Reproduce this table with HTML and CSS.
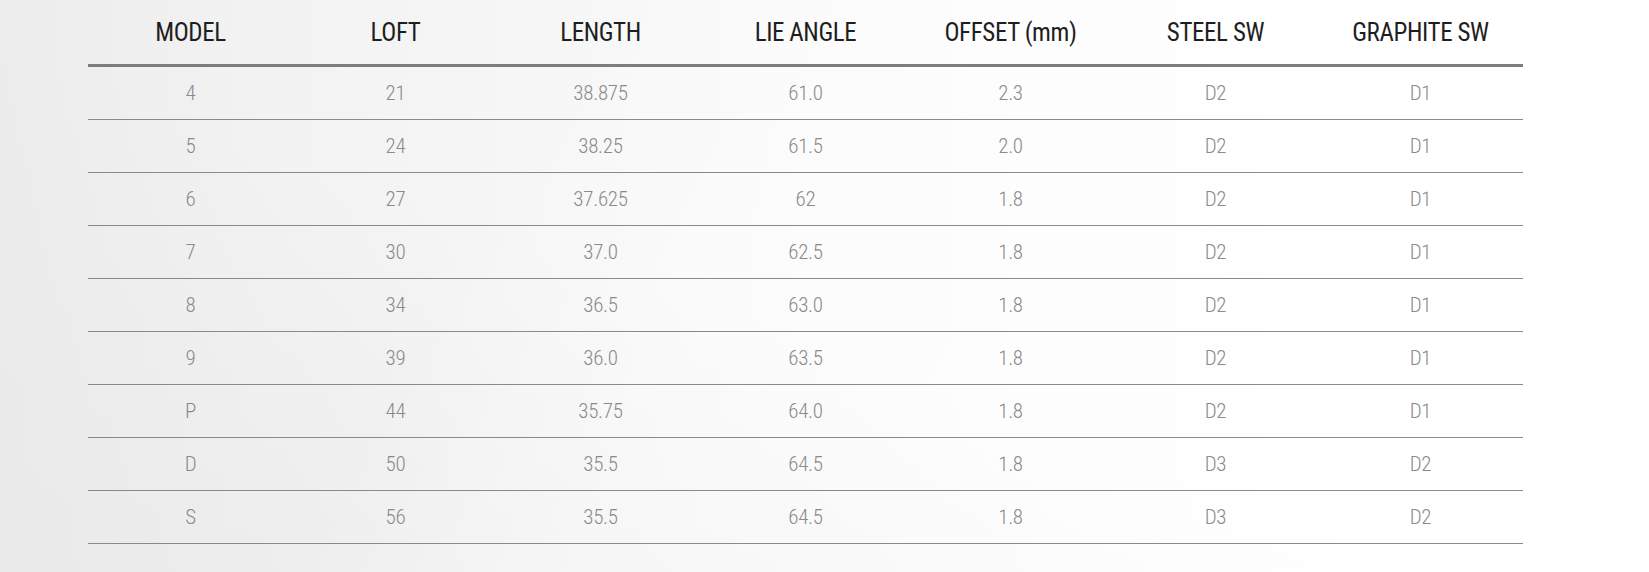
FILE: index.html
```html
<!DOCTYPE html>
<html>
<head>
<meta charset="utf-8">
<link rel="stylesheet" href="styles.css">
</head>
<body>
<div class="page">
  <table class="specs">
    <thead>
      <tr><th>MODEL</th><th>LOFT</th><th>LENGTH</th><th>LIE ANGLE</th><th>OFFSET (mm)</th><th>STEEL SW</th><th>GRAPHITE SW</th></tr>
    </thead>
    <tbody>
      <tr><td>4</td><td>21</td><td>38.875</td><td>61.0</td><td>2.3</td><td>D2</td><td>D1</td></tr>
      <tr><td>5</td><td>24</td><td>38.25</td><td>61.5</td><td>2.0</td><td>D2</td><td>D1</td></tr>
      <tr><td>6</td><td>27</td><td>37.625</td><td>62</td><td>1.8</td><td>D2</td><td>D1</td></tr>
      <tr><td>7</td><td>30</td><td>37.0</td><td>62.5</td><td>1.8</td><td>D2</td><td>D1</td></tr>
      <tr><td>8</td><td>34</td><td>36.5</td><td>63.0</td><td>1.8</td><td>D2</td><td>D1</td></tr>
      <tr><td>9</td><td>39</td><td>36.0</td><td>63.5</td><td>1.8</td><td>D2</td><td>D1</td></tr>
      <tr><td>P</td><td>44</td><td>35.75</td><td>64.0</td><td>1.8</td><td>D2</td><td>D1</td></tr>
      <tr><td>D</td><td>50</td><td>35.5</td><td>64.5</td><td>1.8</td><td>D3</td><td>D2</td></tr>
      <tr><td>S</td><td>56</td><td>35.5</td><td>64.5</td><td>1.8</td><td>D3</td><td>D2</td></tr>
    </tbody>
  </table>
</div>
</body>
</html>
```

FILE: styles.css
```css
html, body {
  margin: 0;
  padding: 0;
}
body {
  width: 1649px;
  height: 572px;
  overflow: hidden;
  background:
    linear-gradient(118deg, rgba(255,255,255,0) 0%, rgba(255,255,255,0) 30%, rgba(255,255,255,0.35) 45%, rgba(255,255,255,0.5) 100%),
    linear-gradient(200deg, rgba(255,255,255,0) 55%, rgba(232,232,232,0.6) 100%),
    linear-gradient(90deg, #ececec 0%, #f2f2f2 15%, #f8f8f8 40%, #fcfcfc 60%, #ffffff 78%, #ffffff 100%);
  font-family: "Roboto Condensed", "Liberation Sans Narrow", "DejaVu Sans Condensed", sans-serif;
  font-stretch: condensed;
}
.page {
  padding-left: 88px;
}
.specs {
  width: 1435px;
  border-collapse: collapse;
  table-layout: fixed;
}
.specs th {
  height: 64px;
  padding: 0;
  font-size: 25px;
  font-weight: normal;
  letter-spacing: -0.4px;
  color: #1e1e1e;
  text-align: center;
  vertical-align: middle;
  border-bottom: 3px solid #7d7d7d;
}
.specs td {
  height: 52px;
  padding: 0;
  font-size: 21px;
  font-weight: 300;
  letter-spacing: -0.3px;
  color: #8a8a8a;
  text-align: center;
  vertical-align: middle;
  border-bottom: 1px solid #8a8a8a;
}
```
